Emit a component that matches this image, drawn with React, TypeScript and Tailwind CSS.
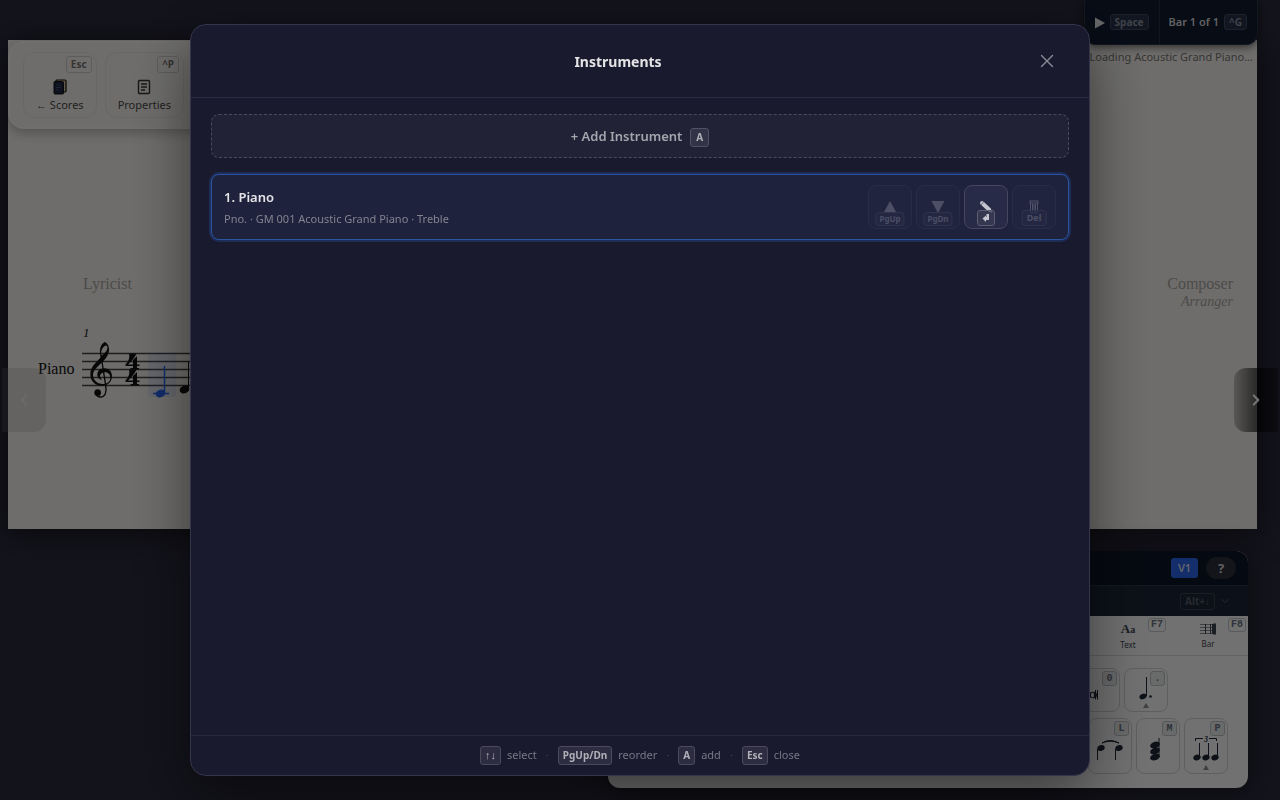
import type { ReactNode } from "react";
import { ChevronDown, ChevronLeft, ChevronRight, X } from "lucide-react";

function Kbd({ children, className = "" }: { children: ReactNode; className?: string }) {
  return (
    <kbd
      className={`inline-flex items-center justify-center rounded-[3px] border font-['Noto_Sans',sans-serif] font-bold ${className}`}
    >
      {children}
    </kbd>
  );
}

function ToolbarButton({ label, shortcut, icon }: { label: ReactNode; shortcut: string; icon: ReactNode }) {
  return (
    <button
      type="button"
      className="relative flex flex-col items-center justify-end gap-[2px] rounded-xl border border-[#e6e4df] px-3 pt-[26px] pb-1 text-[11px] text-[#4b4a48]"
    >
      <Kbd className="absolute top-[3px] right-1 h-[17px] border-[#cfcdc6] px-1 text-[10px] text-[#77746d]">
        {shortcut}
      </Kbd>
      {icon}
      <span className="leading-4">{label}</span>
    </button>
  );
}

function ScoresIcon() {
  return (
    <svg width="14" height="16" viewBox="0 0 14 16">
      <rect x="3" y="1" width="10" height="12" rx="1" fill="#d9cba8" stroke="#111" strokeWidth="1.2" />
      <rect x="1" y="2.5" width="9.5" height="12.5" rx="1" fill="#1d2740" stroke="#111" strokeWidth="1" />
      <path d="M3 6h5M3 8.5h5M3 11h3" stroke="#4a5a80" strokeWidth="0.8" />
    </svg>
  );
}

function PropertiesIcon() {
  return (
    <svg width="14" height="16" viewBox="0 0 14 16" fill="none" stroke="#333">
      <rect x="1.5" y="1.5" width="11" height="13" rx="1" strokeWidth="1.4" />
      <path d="M4 5h6M4 8h6M4 11h4" strokeWidth="1.3" />
    </svg>
  );
}

function Staff() {
  return (
    <svg className="block h-[90px] w-[420px]" viewBox="0 0 420 90">
      <path d="M44 33.5H420M44 41.5H420M44 49.5H420M44 57.5H420M44 65.5H420" stroke="#444" strokeWidth="1.4" />
      <rect x="110" y="33" width="28" height="44" rx="3" fill="#2563eb" opacity="0.1" />
      {/* treble clef */}
      <g transform="translate(44 15) scale(.3333) translate(-246 -225)">
        <path
          d="M302 290C296 268 303 252 314 246C322 248 328 259 327 271C326 292 307 306 294 319C281 331 276 341 281 355C286 367 297 372 307 372C323 372 331 363 331 353C331 343 323 337 315 337C304 337 298 345 301 353C303 358 306 360 309 361C297 359 291 350 292 342C293 332 302 325 312 325C327 325 336 335 336 348C336 366 323 377 306 377C286 377 270 363 271 341C272 321 286 309 304 290ZM305 287C318 277 324 268 322 260C319 254 314 257 308 264C303 271 303 279 305 287Z"
          fill="#111"
        />
        <path d="M303 286L317 376C321 398 315 411 301 411C294 411 290 408 288 402" fill="none" stroke="#111" strokeWidth="4" />
        <circle cx="293" cy="398" r="10" fill="#111" />
      </g>
      {/* time signature */}
      <g fill="#111">
        <path d="M91 33.500H98.500C96.500 38.500 92.500 42 90 44.500H95V40L99 36V44.500H101.500V46H99V48H101V49.500H92.500V48H95V46H87.500V44.500C90.500 41.500 92 38 91 33.500Z" />
        <path d="M91 49.500H98.500C96.500 54.500 92.500 58 90 60.500H95V56L99 52V60.500H101.500V62H99V64H101V65.500H92.500V64H95V62H87.500V60.500C90.500 57.500 92 54 91 49.500Z" />
      </g>
      <g fill="#2563eb" stroke="#2563eb">
        <path d="M115 73.500H131M126.500 72V46" strokeWidth="1.5" />
        <ellipse cx="122.500" cy="73.500" rx="4.500" ry="3.300" transform="rotate(-22 122.500 73.500)" />
      </g>
      <g fill="#111" stroke="#111">
        <path d="M150.500 69V42" />
        <ellipse cx="146.500" cy="69.500" rx="4.500" ry="3.300" transform="rotate(-22 146.500 69.500)" />
      </g>
    </svg>
  );
}

function Score() {
  return (
    <main className="mr-[23px] ml-2 overflow-hidden bg-[#f4f2ee] font-['Liberation_Serif',serif] shadow-[0_4px_30px_rgba(0,0,0,0.6)]">
      <div className="mt-px mr-[220px] flex gap-2 rounded-2xl border-2 border-[#fbfaf6]/40 px-[13px] py-[9px] font-['Noto_Sans',sans-serif] shadow-[0_4px_12px_rgba(0,0,0,0.25)]">
        <ToolbarButton
          label={
            <>
              <span className="font-['Liberation_Sans',sans-serif]">←</span> Scores
            </>
          }
          shortcut="Esc"
          icon={<ScoresIcon />}
        />
        <ToolbarButton label="Properties" shortcut="^P" icon={<PropertiesIcon />} />
      </div>
      <div className="mt-[143px] flex items-start justify-between pr-6 pl-[75px] text-[#a8a6a0]">
        <span className="text-base leading-6">Lyricist</span>
        <div className="flex flex-col items-end">
          <span className="text-base leading-6">Composer</span>
          <span className="text-sm leading-3 italic">Arranger</span>
        </div>
      </div>
      <div className="mt-[10px] pl-[75px] text-[13px] leading-[30px] text-[#222] italic">1</div>
      <div className="-mt-7 flex items-center pl-[30px] text-base text-[#111]">
        <span className="w-0 pt-2 whitespace-nowrap">Piano</span>
        <Staff />
      </div>
      <div className="h-[119px]" />
    </main>
  );
}

function Transport() {
  return (
    <div className="absolute top-0 right-[22px] flex flex-col items-end font-['Noto_Sans',sans-serif]">
      <div className="flex h-[45px] rounded-b-xl border border-t-0 border-[#2a3347] bg-[#101b30] text-[11px] text-[#d8d8d8] shadow-[0_2px_8px_rgba(0,0,0,0.6)]">
        <button type="button" className="flex items-center gap-1 border-r border-[#26314a] px-[10px]">
          <svg className="mt-[2px]" width="11" height="12" viewBox="0 0 11 12">
            <path d="M0 0.500L10 6L0 11.500Z" fill="#e5e5e5" />
          </svg>
          <Kbd className="h-4 border-[#3f4a64] bg-[#26314a] px-1 text-[10px] text-[#8d94a3]">Space</Kbd>
        </button>
        <button type="button" className="flex items-center gap-[5px] pr-[10px] pl-[9px] font-semibold">
          Bar 1 of 1
          <Kbd className="h-4 border-[#3f4a64] bg-[#26314a] px-1 text-[10px] text-[#8d94a3]">^G</Kbd>
        </button>
      </div>
      <p className="pt-1 pr-[5px] text-[11px] leading-4 text-[#77756f]">Loading Acoustic Grand Piano...</p>
    </div>
  );
}

function PaletteTab({ label, shortcut, children }: { label: string; shortcut: string; children: ReactNode }) {
  return (
    <button
      type="button"
      className="relative flex h-10 w-20 flex-col items-center border-b border-[#d5d8da] pt-[5px] text-[8px] text-[#3d4350]"
    >
      {children}
      <span className="leading-[14px]">{label}</span>
      <kbd className="absolute top-[2px] right-[2px] rounded-[3px] border border-[#c4c7ca] px-[2px] font-['Liberation_Mono',monospace] text-[10px] leading-3 font-bold text-[#6b7280]">
        {shortcut}
      </kbd>
    </button>
  );
}

function Tile({ shortcut, label, tall, more, children }: {
  shortcut: string;
  label: string;
  tall?: boolean;
  more?: boolean;
  children: ReactNode;
}) {
  return (
    <button
      type="button"
      aria-label={label}
      className={`relative flex w-11 items-end justify-center rounded-lg border border-[#cfd3d5] ${tall ? "h-14 pb-3" : "h-11 pb-[10px]"}`}
    >
      <kbd className="absolute top-[2px] right-[2px] flex h-[15px] w-[15px] items-center justify-center rounded-[3px] border border-[#bcc0c4] bg-[#e9ebec] font-['Liberation_Mono',monospace] text-[10px] font-bold text-[#6b7280]">
        {shortcut}
      </kbd>
      {children}
      {more && (
        <svg className="absolute bottom-[3px] left-[18px]" width="6" height="5" viewBox="0 0 6 5">
          <path d="M3 0L6 5H0Z" fill="#8b9095" />
        </svg>
      )}
    </button>
  );
}

function Palette() {
  return (
    <aside className="absolute right-8 bottom-3 w-[640px] overflow-hidden rounded-xl bg-[#fafbfa] font-['Noto_Sans',sans-serif] shadow-[0_4px_30px_rgba(0,0,0,0.5)]">
      <div className="flex h-[35px] items-center justify-end gap-2 border-b border-[#2b3648] bg-[#0d1626] pr-3">
        <button type="button" className="h-5 w-[27px] rounded-[3px] bg-[#2a66ea] text-[11px] font-semibold text-[#d7dff0]">
          V1
        </button>
        <button type="button" aria-label="Help" className="h-[22px] w-[30px] rounded-full bg-[#2b2f3a] text-[13px] leading-[22px] font-bold text-[#d5d5d5]">
          ?
        </button>
      </div>
      <div className="flex h-[30px] items-center justify-end gap-1 bg-[#1c2738] pr-[17px] text-[#555c68]">
        <Kbd className="h-[17px] border-[#3b4250] px-1 text-[10px]">
          Alt+<span className="font-['Liberation_Sans',sans-serif]">↓</span>
        </Kbd>
        <ChevronDown size={12} />
      </div>
      <div className="flex justify-end">
        <PaletteTab label="Text" shortcut="F7">
          <span className="font-['Liberation_Serif',serif] text-[13px] leading-4 font-bold">
            A<span className="text-[10px]">a</span>
          </span>
        </PaletteTab>
        <PaletteTab label="Bar" shortcut="F8">
          <svg width="16" height="16" viewBox="0 0 16 16" stroke="#3d4350">
            <path d="M0 3.500H16M0 6.500H16M0 9.500H16M0 12.500H16" strokeWidth="0.600" />
            <path d="M5.500 3V13M10.500 3V13M12.500 3V13" />
            <path d="M14.500 2.500V13.500" strokeWidth="3" />
          </svg>
        </PaletteTab>
      </div>
      <div className="flex flex-col gap-[6px] pt-3 pr-5 pb-[14px]">
        <div className="flex justify-end gap-1 pr-[60px]">
          <Tile shortcut="0" label="Rest">
            <svg className="-ml-3" width="20" height="12" viewBox="0 0 20 12">
              <ellipse cx="11" cy="6" rx="4" ry="3.300" fill="#1f2937" />
              <ellipse cx="10.500" cy="6" rx="1.600" ry="2.600" fill="#fafbfa" />
              <path d="M13.500 1V10.500M15.500 1V10.500" stroke="#1f2937" />
            </svg>
          </Tile>
          <Tile shortcut="." label="Dotted note" more>
            <svg width="14" height="25" viewBox="0 0 14 25">
              <ellipse cx="4" cy="20.500" rx="3.700" ry="2.700" transform="rotate(-20 4 20.500)" fill="#1f2937" />
              <path d="M7.500 20V1" stroke="#1f2937" />
              <circle cx="11.500" cy="20.500" r="1.300" fill="#1f2937" />
            </svg>
          </Tile>
        </div>
        <div className="flex justify-end gap-1">
          <Tile shortcut="L" label="Slur" tall>
            <svg width="28" height="22" viewBox="0 0 28 22" fill="#1f2937" stroke="#1f2937">
              <path d="M6 4Q14 -1 23 4Q14 0.500 6 4Z" />
              <g stroke="none">
                <ellipse cx="5" cy="9" rx="3.800" ry="2.800" transform="rotate(-20 5 9)" />
                <ellipse cx="23" cy="9" rx="3.800" ry="2.800" transform="rotate(-20 23 9)" />
              </g>
              <path d="M1.500 10V21M19.500 10V21" />
            </svg>
          </Tile>
          <Tile shortcut="M" label="Chord" tall>
            <svg className="-ml-1" width="14" height="25" viewBox="0 0 14 25" fill="#1f2937">
              <ellipse cx="6" cy="9" rx="5" ry="3.200" transform="rotate(-20 6 9)" />
              <ellipse cx="6" cy="15" rx="5" ry="3.200" transform="rotate(-20 6 15)" />
              <ellipse cx="6" cy="21" rx="5" ry="3.200" transform="rotate(-20 6 21)" />
              <path d="M10 21V2" stroke="#1f2937" />
            </svg>
          </Tile>
          <Tile shortcut="P" label="Triplet" tall more>
            <svg width="28" height="25" viewBox="0 0 28 25" fill="#1f2937">
              <path d="M3.500 5V2.500H11M17 2.500H24.500V5M7.500 21V7M16.500 21V7M25.500 21V7" fill="none" stroke="#1f2937" />
              <text x="12" y="5.500" className="font-['Liberation_Serif',serif] text-[8px] font-bold italic">3</text>
              <ellipse cx="5" cy="21.500" rx="3.800" ry="2.800" transform="rotate(-20 5 21.500)" />
              <ellipse cx="14" cy="21.500" rx="3.800" ry="2.800" transform="rotate(-20 14 21.500)" />
              <ellipse cx="23" cy="21.500" rx="3.800" ry="2.800" transform="rotate(-20 23 21.500)" />
            </svg>
          </Tile>
        </div>
      </div>
    </aside>
  );
}

function RowAction({ label, disabled, icon, keyLabel, keyClass }: {
  label: string;
  disabled?: boolean;
  icon: ReactNode;
  keyLabel: ReactNode;
  keyClass: string;
}) {
  return (
    <button
      type="button"
      aria-label={label}
      disabled={disabled}
      className="relative flex h-11 w-11 items-center justify-center rounded-lg border border-[#45475e] bg-[#282b48] disabled:opacity-30"
    >
      {icon}
      <Kbd className={`absolute left-1/2 -translate-x-1/2 border-[#5d5e72] bg-[#3b3c53]/70 text-[#b4b5c0] ${keyClass}`}>
        {keyLabel}
      </Kbd>
    </button>
  );
}

const hints = [
  { keys: <span className="font-['Liberation_Sans',sans-serif] text-[11px]">↑↓</span>, text: "select" },
  { keys: "PgUp/Dn", text: "reorder" },
  { keys: "A", text: "add" },
  { keys: "Esc", text: "close" },
];

function InstrumentsDialog() {
  return (
    <section
      role="dialog"
      aria-modal="true"
      aria-labelledby="dialog-title"
      className="flex w-full max-w-[900px] flex-col rounded-2xl border border-[#34344a] bg-[#1a1a2e] font-['Noto_Sans',sans-serif] shadow-[0_20px_60px_rgba(0,0,0,0.5)]"
    >
      <header className="flex h-[73px] items-center border-b border-[#2c2c42] px-5">
        <h2 id="dialog-title" className="flex-1 pt-[2px] text-center text-sm font-bold text-[#e4e4e6]">
          Instruments
        </h2>
        <button type="button" aria-label="Close" className="flex h-11 w-11 items-center justify-center text-[#8c8c98]">
          <X size={22} strokeWidth={1.5} />
        </button>
      </header>

      <div className="flex flex-1 flex-col gap-4 px-5 py-4">
        <button
          type="button"
          className="flex h-11 items-center justify-center gap-2 rounded-lg border border-dashed border-[#494a5a] bg-[#212236] pt-[2px] text-[13px] font-semibold text-[#a5a5ae]"
        >
          + Add Instrument
          <Kbd className="h-[19px] border-[#505164] bg-[#323347] px-[5px] text-[10px] text-[#b0b0b8]">A</Kbd>
        </button>

        <div className="flex items-center justify-between rounded-lg border border-[#2b559f] bg-[#1e223d] px-3 py-[10px] ring-2 ring-[#1e2d57]">
          <div className="pt-[2px]">
            <div className="text-[13px] leading-5 font-semibold text-[#e4e4e6]">1. Piano</div>
            <div className="mt-[2px] text-[11px] leading-5 text-[#82848f]">
              Pno. · GM 001 Acoustic Grand Piano · Treble
            </div>
          </div>
          <div className="flex gap-1">
            <RowAction
              label="Move up"
              disabled
              keyLabel="PgUp"
              keyClass="bottom-[2px] h-[14px] px-[3px] text-[8px]"
              icon={
                <svg width="14" height="12" viewBox="0 0 14 12">
                  <path d="M7 0L13.500 12H0.500Z" fill="#b9bac4" />
                </svg>
              }
            />
            <RowAction
              label="Move down"
              disabled
              keyLabel="PgDn"
              keyClass="bottom-[2px] h-[14px] px-[3px] text-[8px]"
              icon={
                <svg width="14" height="12" viewBox="0 0 14 12">
                  <path d="M0.500 0H13.500L7 12Z" fill="#b9bac4" />
                </svg>
              }
            />
            <RowAction
              label="Edit instrument"
              keyClass="bottom-[2px] h-4 w-[18px]"
              icon={
                <svg width="14" height="14" viewBox="0 0 14 14">
                  <path d="M3 3L10 9.500" stroke="#c3c4ce" strokeWidth="4" strokeLinecap="round" />
                  <path d="M11.500 8L13.500 13L8.500 11Z" fill="#c3c4ce" />
                  <path d="M5 1.500L2 5" stroke="#3b3c53" strokeWidth="0.700" />
                </svg>
              }
              keyLabel={
                <svg width="8" height="8" viewBox="0 0 8 8">
                  <path d="M7 0V6H4V8L0.500 4.500L4 1.500V3H4.500V0Z" fill="#c3c4ce" />
                </svg>
              }
            />
            <RowAction
              label="Delete instrument"
              disabled
              keyLabel="Del"
              keyClass="bottom-[2px] h-4 px-1 text-[9px]"
              icon={
                <svg width="10" height="14" viewBox="0 0 10 14" fill="none" stroke="#c3c4ce">
                  <rect x="1" y="1" width="8" height="2" />
                  <path d="M1.500 3V13H8.500V3M3.500 4V12M5 4V12M6.500 4V12" />
                </svg>
              }
            />
          </div>
        </div>
      </div>

      <footer className="flex h-10 items-center justify-center border-t border-[#28283d] text-[11px] text-[#777885]">
        {hints.map((hint, i) => (
          <div key={hint.text} className="flex items-center">
            {i > 0 && <span className="w-[21px] text-center text-[#3d3e50]">·</span>}
            <Kbd className="mr-[6px] h-[19px] border-[#4b4a5c] bg-[#2d2c40] px-1 text-[10px] text-[#b0b0b8]">
              {hint.keys}
            </Kbd>
            {hint.text}
          </div>
        ))}
      </footer>
    </section>
  );
}

export default function App() {
  return (
    <div className="relative min-h-screen overflow-hidden bg-[#2b2b3d] pt-10">
      <Score />
      <button
        type="button"
        aria-label="Previous page"
        className="absolute top-[368px] left-[2px] flex h-16 w-11 items-center justify-center rounded-r-xl bg-[#888]/20 text-white/40"
      >
        <ChevronLeft size={18} strokeWidth={3} />
      </button>
      <button
        type="button"
        aria-label="Next page"
        className="absolute top-[368px] right-[2px] flex h-16 w-11 items-center justify-center rounded-l-xl bg-linear-to-r from-black/20 via-black/60 to-black/30 text-white"
      >
        <ChevronRight size={18} strokeWidth={3} />
      </button>
      <Transport />
      <Palette />

      <div className="fixed inset-0 flex justify-center bg-black/55 px-4 py-6">
        <InstrumentsDialog />
      </div>
    </div>
  );
}
